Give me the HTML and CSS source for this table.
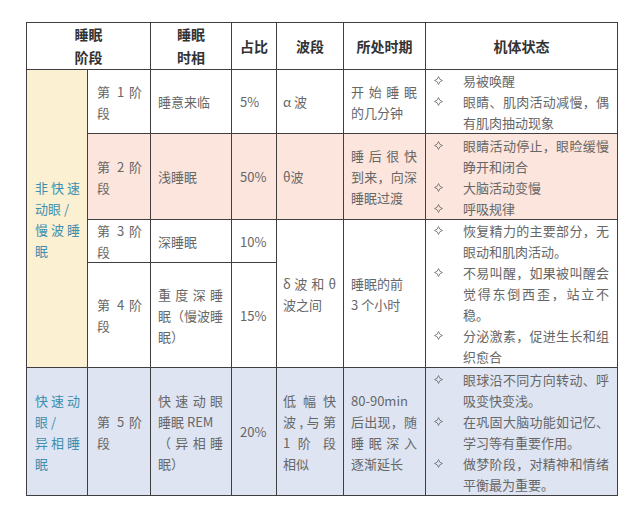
FILE: index.html
```html
<!DOCTYPE html>
<html lang="zh-CN">
<head>
<meta charset="utf-8">
<title>睡眠阶段</title>
<link rel="stylesheet" href="styles.css">
</head>
<body>
<svg class="defs" width="0" height="0" aria-hidden="true">
  <symbol id="star" viewBox="0 0 10 10">
    <path d="M5 0.6 Q5.7 4.3 9.4 5 Q5.7 5.7 5 9.4 Q4.3 5.7 0.6 5 Q4.3 4.3 5 0.6 Z" fill="none" stroke="#6a6a6a" stroke-width="0.9" stroke-linejoin="round"/>
  </symbol>
</svg>
<table class="sleep">
  <colgroup>
    <col class="w-group"><col class="w-stage"><col class="w-phase"><col class="w-pct"><col class="w-wave"><col class="w-period"><col class="w-state">
  </colgroup>
  <thead>
    <tr class="r-head">
      <th colspan="2">睡眠<br>阶段</th>
      <th>睡眠<br>时相</th>
      <th>占比</th>
      <th>波段</th>
      <th>所处时期</th>
      <th>机体状态</th>
    </tr>
  </thead>
  <tbody>
    <tr class="r1">
      <td rowspan="4" class="group nrem"><span class="ln jl">非快速</span><span class="ln">动眼 /</span><span class="ln jl">慢波睡</span><span class="ln">眠</span></td>
      <td class="stage"><span class="ln jl">第 1 阶</span><span class="ln">段</span></td>
      <td class="phase">睡意来临</td>
      <td class="pct">5%</td>
      <td class="wave">α 波</td>
      <td class="period"><span class="ln jl">开始睡眠</span><span class="ln">的几分钟</span></td>
      <td class="state">
        <div class="item"><span class="dia"><svg><use href="#star"/></svg></span><div class="txt"><span class="ln">易被唤醒</span></div></div>
        <div class="item"><span class="dia"><svg><use href="#star"/></svg></span><div class="txt"><span class="ln jl">眼睛、肌肉活动减慢，偶</span><span class="ln">有肌肉抽动现象</span></div></div>
      </td>
    </tr>
    <tr class="r2 pink">
      <td class="stage"><span class="ln jl">第 2 阶</span><span class="ln">段</span></td>
      <td class="phase">浅睡眠</td>
      <td class="pct">50%</td>
      <td class="wave">θ波</td>
      <td class="period"><span class="ln jl">睡后很快</span><span class="ln jl">到来，向深</span><span class="ln">睡眠过渡</span></td>
      <td class="state">
        <div class="item"><span class="dia"><svg><use href="#star"/></svg></span><div class="txt"><span class="ln jl">眼睛活动停止，眼睑缓慢</span><span class="ln">睁开和闭合</span></div></div>
        <div class="item"><span class="dia"><svg><use href="#star"/></svg></span><div class="txt"><span class="ln">大脑活动变慢</span></div></div>
        <div class="item"><span class="dia"><svg><use href="#star"/></svg></span><div class="txt"><span class="ln">呼吸规律</span></div></div>
      </td>
    </tr>
    <tr class="r3">
      <td class="stage"><span class="ln jl">第 3 阶</span><span class="ln">段</span></td>
      <td class="phase">深睡眠</td>
      <td class="pct">10%</td>
      <td rowspan="2" class="wave"><span class="ln jl">δ 波 和 θ</span><span class="ln">波之间</span></td>
      <td rowspan="2" class="period"><span class="ln">睡眠的前</span><span class="ln">3 个小时</span></td>
      <td rowspan="2" class="state">
        <div class="item"><span class="dia"><svg><use href="#star"/></svg></span><div class="txt"><span class="ln jl">恢复精力的主要部分，无</span><span class="ln">眼动和肌肉活动。</span></div></div>
        <div class="item"><span class="dia"><svg><use href="#star"/></svg></span><div class="txt"><span class="ln jl">不易叫醒，如果被叫醒会</span><span class="ln jl">觉得东倒西歪，站立不</span><span class="ln">稳。</span></div></div>
        <div class="item"><span class="dia"><svg><use href="#star"/></svg></span><div class="txt"><span class="ln jl">分泌激素，促进生长和组</span><span class="ln">织愈合</span></div></div>
      </td>
    </tr>
    <tr class="r4">
      <td class="stage"><span class="ln jl">第 4 阶</span><span class="ln">段</span></td>
      <td class="phase"><span class="ln jl">重度深睡</span><span class="ln jl">眠（慢波睡</span><span class="ln">眠）</span></td>
      <td class="pct">15%</td>
    </tr>
    <tr class="r5 blue">
      <td class="group rem"><span class="ln jl">快速动</span><span class="ln">眼 /</span><span class="ln jl">异相睡</span><span class="ln">眠</span></td>
      <td class="stage"><span class="ln jl">第 5 阶</span><span class="ln">段</span></td>
      <td class="phase"><span class="ln jl">快速动眼</span><span class="ln">睡眠 REM</span><span class="ln jl">（异相睡</span><span class="ln">眠）</span></td>
      <td class="pct">20%</td>
      <td class="wave"><span class="ln jl">低幅快</span><span class="ln jl">波,与第</span><span class="ln jl">1 阶 段</span><span class="ln">相似</span></td>
      <td class="period"><span class="ln">80-90min</span><span class="ln jl">后出现，随</span><span class="ln jl">睡眠深入</span><span class="ln">逐渐延长</span></td>
      <td class="state">
        <div class="item"><span class="dia"><svg><use href="#star"/></svg></span><div class="txt"><span class="ln jl">眼球沿不同方向转动、呼</span><span class="ln">吸变快变浅。</span></div></div>
        <div class="item"><span class="dia"><svg><use href="#star"/></svg></span><div class="txt"><span class="ln jl">在巩固大脑功能如记忆、</span><span class="ln">学习等有重要作用。</span></div></div>
        <div class="item"><span class="dia"><svg><use href="#star"/></svg></span><div class="txt"><span class="ln jl">做梦阶段，对精神和情绪</span><span class="ln">平衡最为重要。</span></div></div>
      </td>
    </tr>
  </tbody>
</table>
</body>
</html>
```
FILE: styles.css
```css
html, body {
  margin: 0;
  background: #ffffff;
}

body {
  font-family: "Noto Sans CJK SC", "Noto Sans", sans-serif;
}

.defs {
  position: absolute;
  width: 0;
  height: 0;
  overflow: hidden;
}

.sleep {
  border-collapse: collapse;
  table-layout: fixed;
  width: 592px;
  margin: 22px 0 0 26px;
  font-size: 13px;
  line-height: 21px;
  color: #676767;
}

.w-group { width: 61px; }
.w-stage { width: 63px; }
.w-phase { width: 81px; }
.w-pct { width: 45px; }
.w-wave { width: 67px; }
.w-period { width: 82px; }
.w-state { width: 192px; }

.sleep th,
.sleep td {
  border: 1px solid #3f3f3f;
  vertical-align: middle;
  text-align: left;
  padding: 0;
}

.sleep th {
  color: #333333;
  font-weight: 700;
  font-size: 14px;
  line-height: 23px;
  text-align: center;
}

.r-head { height: 42px; }
.r1 { height: 64px; }
.r2 { height: 86px; }
.r3 { height: 42px; }
.r4 { height: 105px; }
.r5 { height: 128px; }

.pink td { background: #fbe5dc; }
.blue td { background: #dee4f2; }
.nrem { background: #fcf0d3; }

.ln { display: block; }
.jl {
  text-align: justify;
  text-align-last: justify;
}

.group {
  color: #3f8fae;
  padding: 0 7px 0 8px !important;
}

.stage { padding: 0 8px 0 9px !important; }
.phase { padding: 0 8px 0 7px !important; }
.pct { padding: 0 4px 0 8px !important; }
.wave { padding: 0 7px 0 6px !important; }
.period { padding: 0 8px 0 7px !important; }
.state { padding: 0 4px 0 8px !important; }

.item {
  display: grid;
  grid-template-columns: 29px 146px;
}

.dia {
  display: flex;
  align-items: center;
  height: 21px;
}

.dia svg {
  width: 9px;
  height: 9px;
}
```
